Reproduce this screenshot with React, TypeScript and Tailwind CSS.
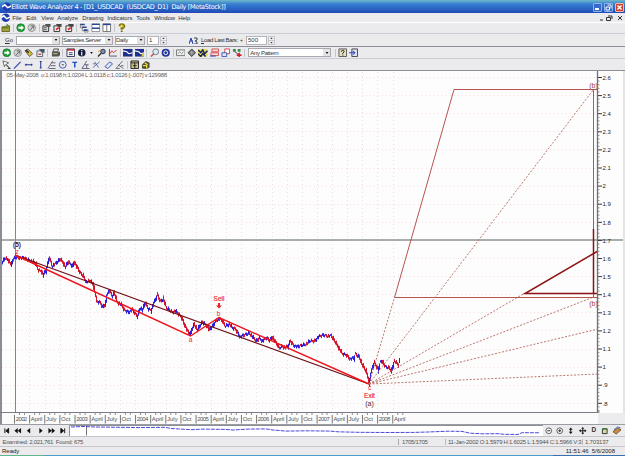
import React from 'react';
import clsx from 'clsx';

interface IconProps {
  name: string;
}

const drawings: Record<string, React.ReactNode> = {
  folder: (
    <>
      <path d="M1 4h3l1-1h4v6H1z" fill="#a8a030" stroke="#4c4a20" strokeWidth=".8" />
      <path d="M6 1l2 2M2 5h6" stroke="#268026" />
    </>
  ),
  play: (
    <>
      <circle cx="5" cy="5" r="4.2" fill="#27a03a" stroke="#0b6420" strokeWidth=".6" />
      <path d="M2.5 4h3V2.3L8.3 5 5.5 7.7V6h-3z" fill="#fff" />
    </>
  ),
  playOff: (
    <>
      <circle cx="5" cy="5" r="4" fill="#d0d2d2" stroke="#888" strokeWidth=".8" />
      <path d="M3 8l4-5M4 3h3v3" stroke="#666" fill="none" />
    </>
  ),
  edit: (
    <>
      <path d="M1 3h6v6H1z" fill="#ddd" stroke="#333" />
      <path d="M3 1h6v3H5z" fill="#555" />
      <path d="M2 5h3M2 7h3" stroke="#555" />
    </>
  ),
  editRed: (
    <>
      <path d="M1 3h6v6H1z" fill="#eee" stroke="#333" />
      <path d="M3 1h6v3H5z" fill="#444" />
      <path d="M3 7l3-2" stroke="#d22" strokeWidth="1.800" />
    </>
  ),
  cascade: (
    <>
      <path d="M1 1.500h5M3 4.500h5M5 7.500h4" stroke="#26468f" strokeWidth="1.600" />
      <path d="M1.500 1v4h2M3.500 4v4h2M5.500 7v2.500h4V7" stroke="#666" strokeWidth=".7" fill="none" />
    </>
  ),
  tileH: (
    <>
      <path d="M1 1h8v8H1z" fill="#fff" stroke="#667" strokeWidth=".7" />
      <path d="M1 1.500h8M1 5.500h8" stroke="#26468f" strokeWidth="1.400" />
    </>
  ),
  tileV: (
    <>
      <path d="M1 1h8v8H1zM5 1v8" fill="#fff" stroke="#555" strokeWidth=".8" />
      <path d="M1 1.500h8" stroke="#26468f" strokeWidth="1.500" />
    </>
  ),
  help: (
    <>
      <path d="M3 3.500Q3 1.500 5 1.500T7.500 3.500Q7 5 5 5.500V7" stroke="#827600" strokeWidth="2.500" fill="none" />
      <path d="M3.500 3.500Q4 2 5 2t1.500 1.500L5 5" stroke="#f4dc30" strokeWidth="1" fill="none" />
      <path d="M4 8h2v1.500H4z" fill="#756900" />
    </>
  ),
  tag: (
    <>
      <path d="M1 3l3-2 5 5-3 3z" fill="#d9c436" stroke="#333" strokeWidth=".8" />
      <path d="M2 2l3 3" stroke="#222" strokeWidth="1.500" />
    </>
  ),
  props: (
    <>
      <path d="M1 3h6v6H1z" fill="#eee" stroke="#345" strokeWidth=".8" />
      <path d="M3 1h6v4H6z" fill="#456" />
      <path d="M2.500 6.500h3" stroke="#c33" strokeWidth="1.400" />
    </>
  ),
  print: (
    <>
      <path d="M3 1h5L7 4H2z" fill="#ddd" stroke="#333" strokeWidth=".8" />
      <path d="M1 4h8.500v3.500L8 9H1z" fill="#555" />
      <path d="M2 6h5" stroke="#d4c85a" />
    </>
  ),
  list: (
    <>
      <path d="M1 1h8v8H1z" fill="#fff" stroke="#335" />
      <path d="M1 2h8" stroke="#b22" strokeWidth="1.500" />
      <path d="M3 5h4M3 7h4" stroke="#335" />
    </>
  ),
  info: (
    <>
      <circle cx="5" cy="5" r="4" fill="#161c3c" />
      <path d="M5 2v1.300M5 4.200V8" stroke="#fff" strokeWidth="1.200" />
    </>
  ),
  find: (
    <>
      <circle cx="6.300" cy="3.700" r="2.400" fill="#7d8fb0" stroke="#26324c" />
      <path d="M1 9l3.500-3.500" stroke="#333" strokeWidth="1.500" />
      <path d="M1 4l3-2" stroke="#c99a22" />
    </>
  ),
  chart: (
    <>
      <path d="M1.500 1v7.500H9.500" stroke="#556" fill="none" />
      <path d="M2 6l2-3 2 2 3-3" stroke="#c33" fill="none" />
    </>
  ),
  wave: (
    <>
      <path d="M0 1h10v8H0z" fill="#1c2f8c" />
      <path d="M0 3l4 1 2 2 4-1" stroke="#fff" strokeWidth="1.200" fill="none" />
    </>
  ),
  waveYellow: (
    <>
      <path d="M0 1h10v8H0z" fill="#1c2f8c" />
      <path d="M0 3l4 1 2 2 4-1" stroke="#fff" strokeWidth="1.200" fill="none" />
      <path d="M7 6h2.500v3H7z" fill="#dcca33" />
    </>
  ),
  zoom: (
    <>
      <circle cx="6" cy="4" r="3" fill="#d9f0f6" stroke="#667" strokeWidth=".9" />
      <path d="M1 9l3-3" stroke="#c0504a" strokeWidth="1.600" />
    </>
  ),
  globe: (
    <>
      <circle cx="5" cy="5" r="4.300" fill="#223596" />
      <circle cx="5" cy="5" r="2" fill="none" stroke="#fff" />
    </>
  ),
  panel: (
    <>
      <path d="M.5 2h9v6h-9z" fill="#eee" stroke="#777" />
      <path d="M2 6l2-2 2 2 2-2" stroke="#7a9a7a" fill="none" />
    </>
  ),
  gem: (
    <>
      <path d="M5 1l4 4-4 4-4-4z" fill="#777" stroke="#444" />
      <path d="M3 5h4M5 3v4" stroke="#bbb" strokeWidth=".8" />
    </>
  ),
  stripes: (
    <>
      <path d="M0 1h10v8H0z" fill="#e8d95a" />
      <path d="M0 2l3 3 2-3 2 4 3-3M0 6l3 3 2-3 3 3" stroke="#16245c" strokeWidth="1.500" fill="none" />
    </>
  ),
  boxRed: (
    <>
      <path d="M2 1h7v3H2zM1 5h8v3H1z" fill="#f6d6d6" stroke="#cf4444" strokeWidth=".9" />
      <path d="M0 8.500h6" stroke="#2b46b8" />
    </>
  ),
  cardRed: (
    <>
      <path d="M4 1h5v5H4z" fill="#fff" stroke="#cf4444" />
      <path d="M1 5h5v4H1z" fill="#dfe4ff" stroke="#4459bb" />
    </>
  ),
  nodes: (
    <>
      <path d="M1 1h3v3H1zM6 1h3v3H6z" fill="#3a8a48" />
      <path d="M3 4l4 3" stroke="#444" />
      <path d="M7.500 5v5M5 7.500h5" stroke="#c9202a" strokeWidth="1.600" />
    </>
  ),
  helpBox: (
    <>
      <path d="M1 1h8v8H1z" fill="#e6e2c2" stroke="#555" />
      <path d="M3.500 4Q3.500 2.500 5 2.500T6.500 4L5 5.500v1M5 7v1" stroke="#222" fill="none" />
    </>
  ),
  exit: (
    <>
      <path d="M3 1h6v8H3z" fill="#dfe4f4" stroke="#444" />
      <path d="M0 5h6M4 3l2.500 2L4 7" stroke="#2640c0" fill="none" />
    </>
  ),
  cursor: (
    <>
      <path d="M1 1l6 2-2.500 1.500L8 8.500 3.500 5 2.500 7z" fill="#fff" stroke="#444" strokeWidth=".8" />
      <path d="M6 9h3" stroke="#333" />
    </>
  ),
  line: <path d="M1 9l7-7" stroke="#2f42ad" strokeWidth="1.200" />,
  hline: <path d="M1 5h8M2 4v2M8 4v2" stroke="#26368f" strokeWidth="1.100" />,
  vline: <path d="M5 1v8M4 1.500h2M4 8.500h2" stroke="#26368f" strokeWidth="1.100" />,
  fib: <path d="M1 9l5-8M5 3h4M4 6h5M2 9h7" stroke="#4b4f66" strokeWidth=".9" />,
  circle: (
    <>
      <circle cx="5" cy="5" r="3.600" fill="none" stroke="#2b48b8" strokeWidth=".9" />
      <path d="M4 5h2" stroke="#333" />
    </>
  ),
  text: <path d="M2.500 2.500h5M5 2v6" stroke="#1e4ec8" strokeWidth="1.500" />,
  angle: <path d="M1 9l5-8M1 9h8M4 5h4M6 5v4" stroke="#4d526e" strokeWidth=".9" fill="none" />,
  cross: <path d="M1 8l7-6M3 2l4 6M1 4h3" stroke="#4d5ea8" strokeWidth=".9" fill="none" />,
  channel: <path d="M1 7l5-5 3 2-5 5z" fill="#d8e2ff" stroke="#3648a0" strokeWidth=".9" />,
  fan: <path d="M1 9l7-8M3 5l6 4M1 9h4M6 6l3 0" stroke="#555a70" strokeWidth=".9" fill="none" />,
  table: (
    <>
      <path d="M1 1h8v8H1z" fill="#ccc58a" stroke="#222" />
      <path d="M1 3h8M5 3v6M3 6h4" stroke="#222" />
    </>
  ),
  money: (
    <>
      <path d="M1 5l4-4 4 2v5L6 9.500 1 9z" fill="#4b4b33" />
      <path d="M2 6h4v3M4 3l3 2" stroke="#eddb42" strokeWidth="1.400" fill="none" />
    </>
  ),
  first: <path d="M3 2.500v5M7 2.500v5L4 5z" stroke="#111" fill="#111" />,
  rewind: <path d="M5 2v6L1.500 5zM8.500 2v6L5 5z" fill="#111" />,
  prev: <path d="M6.500 2v6l-3.500-3z" fill="#111" />,
  next: <path d="M3.500 2v6l3.500-3z" fill="#111" />,
  forward: <path d="M1.500 2v6L5 5zM5 2v6l3.500-3z" fill="#111" />,
  last: <path d="M7 2.500v5M3 2.500v5L6 5z" stroke="#111" fill="#111" />,
  zoomOut: (
    <>
      <circle cx="5" cy="5" r="3" fill="#fff" stroke="#333" strokeWidth=".8" />
      <path d="M3.500 5h3" stroke="#222" />
    </>
  ),
  zoomIn: (
    <>
      <circle cx="5" cy="5" r="3" fill="#fff" stroke="#333" strokeWidth=".8" />
      <path d="M3.500 5h3M5 3.500v3" stroke="#222" />
    </>
  ),
  updown: <path d="M5 1.500L7 4H3zM5 8.500L3 6h4zM4.500 3h1v4h-1z" fill="#111" />,
  move: (
    <>
      <path d="M5 2v6M2 5h6" stroke="#111" strokeWidth="1" />
      <path d="M5 1l1.500 2h-3zM5 9L3.500 7h3zM1 5l2-1.500v3zM9 5L7 3.500v3z" fill="#111" />
    </>
  ),
  lock: (
    <>
      <path d="M2.500 3h5v5h-5z" fill="#dcd9a0" stroke="#333" />
      <path d="M2.500 3h5" stroke="#2c7a35" strokeWidth="1.200" />
    </>
  ),
  book: (
    <>
      <path d="M1 6l5-4 3.500 2-5 4.500z" fill="#c98b3c" stroke="#5c3a1c" strokeWidth=".8" />
      <path d="M2 4l4-3 3 1" stroke="#4a67c0" fill="none" />
    </>
  ),
  app: (
    <>
      <circle cx="5" cy="5" r="4.500" fill="#1d3fae" />
      <path d="M0 5l3-2 3 3 4-2" stroke="#fff" strokeWidth="1.600" fill="none" />
    </>
  ),
};

const Icon: React.FC<IconProps> = ({ name }) => (
  <span className="flex w-[11.3px] shrink-0 items-center justify-center">
    <svg viewBox="0 0 10 10" className="size-[9.5px]">
      {drawings[name]}
    </svg>
  </span>
);

const Sep = () => (
  <span className="flex w-[3.6px] shrink-0 justify-center">
    <span className="h-[8px] w-px bg-[#c4c4cc]" />
  </span>
);

// '|' draws a separator between groups
const IconRow: React.FC<{ items: string[] }> = ({ items }) => (
  <>{items.map((name, i) => (name === '|' ? <Sep key={i} /> : <Icon key={i} name={name} />))}</>
);

const Combo: React.FC<{ label: string; className: string }> = ({ label, className }) => (
  <div className={clsx('flex h-[9px] shrink-0 items-center border border-[#a8a8b0] bg-white', className)}>
    <span className="grow">{label}</span>
    <span className="flex h-full w-[7px] shrink-0 items-center justify-center bg-[#e4e2e2]">
      <svg viewBox="0 0 4 3" className="h-[2px] w-[4px]">
        <path d="M0 0h4L2 3z" fill="#111" />
      </svg>
    </span>
  </div>
);

const Spinner = () => (
  <svg viewBox="0 0 7 9" className="ml-px h-[9px] w-[7px] shrink-0">
    <path d="M.5 .5h6v8h-6zM.5 4.500h6" fill="#eee" stroke="#b5b5bd" strokeWidth=".7" />
    <path d="M3.500 1.500l1.200 1.500H2.300zM3.500 7.500L2.300 6h2.400z" fill="#333" />
  </svg>
);

const menu = [
  { label: 'File', width: 'w-[14px]' },
  { label: 'Edit', width: 'w-[15px]' },
  { label: 'View', width: 'w-[16px]' },
  { label: 'Analyze', width: 'w-[25px]' },
  { label: 'Drawing', width: 'w-[25px]' },
  { label: 'Indicators', width: 'w-[29px]' },
  { label: 'Tools', width: 'w-[18px]' },
  { label: 'Window', width: 'w-[24px]' },
  { label: 'Help', width: 'w-[14px]' },
];

const prices: [number, number][] = [
  [2, 262], [5, 258], [8, 260], [11, 265], [13, 259], [16, 257], [20, 258], [24, 258], [28, 260], [33, 262],
  [36, 265], [38, 270], [41, 271], [43, 275], [46, 270], [48, 261], [49, 258], [52, 266], [56, 263], [60, 259],
  [63, 263], [65, 267], [68, 262], [72, 266], [74, 262], [77, 268], [80, 273], [83, 276], [86, 282], [90, 281],
  [93, 285], [95, 294], [97, 302], [100, 303], [102, 307], [105, 304], [107, 293], [109, 291], [112, 296],
  [114, 293], [117, 302], [121, 305], [124, 310], [128, 312], [132, 310], [135, 314], [137, 316], [140, 308],
  [142, 310], [145, 303], [148, 309], [151, 310], [153, 304], [155, 300], [157, 295], [160, 301], [163, 299],
  [166, 308], [169, 310], [172, 312], [175, 311], [178, 314], [181, 317], [184, 324], [187, 331], [190, 334],
  [192, 328], [194, 324], [197, 330], [202, 322], [206, 325], [209, 330], [213, 325], [216, 320], [219, 319],
  [222, 321], [225, 326], [229, 324], [232, 328], [235, 329], [238, 334], [240, 337], [244, 335], [249, 333],
  [253, 338], [256, 341], [259, 338], [262, 341], [266, 338], [269, 340], [272, 337], [275, 342], [279, 348],
  [282, 346], [285, 348], [288, 346], [290, 341], [293, 345], [297, 347], [302, 345], [306, 344], [310, 341],
  [314, 341], [318, 337], [323, 335], [328, 336], [331, 336], [335, 342], [338, 347], [342, 354], [346, 355],
  [350, 359], [354, 358], [355, 354], [359, 357], [362, 365], [366, 372], [369, 383], [371, 370], [374, 363],
  [378, 370], [380, 362], [382, 361], [385, 367], [389, 368], [391, 371], [394, 361], [397, 364], [399, 366],
];

// One bar per pixel column, split into up (blue) and down (red) strokes
const buildBars = () => {
  let up = '';
  let down = '';
  let k = 0;
  for (let x = 2; x < 399; x++) {
    while (k < prices.length - 2 && prices[k + 1][0] <= x) k++;
    const [x0, y0] = prices[k];
    const [x1, y1] = prices[k + 1];
    const slope = (y1 - y0) / (x1 - x0);
    const wobble = ((x * 37) % 11) / 5 - 1;
    const y = y0 + slope * (x - x0) + wobble;
    const half = 0.9 + Math.abs(slope) / 2 + ((x * 13) % 5) / 5;
    const bar = `M${x + 0.5} ${(y - half).toFixed(1)}V${(y + half).toFixed(1)}`;
    if (slope + ((x * 29) % 7) / 2 - 1.6 > 0) down += bar;
    else up += bar;
  }
  return { up, down };
};

const bars = buildBars();
const quarters = Array.from({ length: 26 }, (_, i) => 14.5 + i * 15.13);
const levels = ['2.6', '2.5', '2.4', '2.3', '2.2', '2.1', '2', '1.9', '1.8', '1.7', '1.6', '1.5', '1.4', '1.3', '1.2', '1.1', '1', '.9', '.8'];
const levelY = (i: number) => 77.5 + i * 18.1;

const Chart = () => (
  <svg viewBox="0 71 625 342" className="block h-[342px] w-[625px] shrink-0 font-['Liberation_Sans'] text-[6px]">
    <path d="M0 71h625v342H0z" fill="#fdfdfd" />
    <g stroke="#f1dede" strokeWidth="1" strokeDasharray="1 3" shapeRendering="crispEdges">
      {levels.map((l, i) => (
        <path key={l} d={`M2 ${levelY(i)}H597`} />
      ))}
      {quarters.slice(1).map((x) => (
        <path key={x} d={`M${x + 0.3} 72V412`} />
      ))}
    </g>

    <path d="M15.500 71V412" stroke="#7f8886" />
    <path d="M2 240H623" stroke="#8b9492" strokeWidth="1.300" />

    <path d={bars.up} stroke="#2a1fe0" />
    <path d={bars.down} stroke="#d4142c" />
    <path d="M399.500 358v5" stroke="#5c2a2a" />

    <path d="M15 255L369 384" stroke="#6e1218" strokeWidth="1.300" fill="none" />
    <path d="M15 255L190.500 336L219 317.500L369 384" stroke="#ee141c" strokeWidth="1.400" fill="none" />

    <g stroke="#b2695c" strokeWidth=".9" strokeDasharray="2 1.600" fill="none">
      <path d="M369 384L394.500 297.300" />
      <path d="M369 384L593.500 89.500" />
      <path d="M369 384L525 293" />
      <path d="M369 384L593 297.300" />
      <path d="M369 384L598 329" />
      <path d="M369 384L598 374" />
    </g>
    <path d="M394.500 297.500L454 89.500H598M593.500 89.500V297.500M394.500 297.500H598" stroke="#b8544e" fill="none" />
    <path d="M598 251L525 293.500H598M593.500 229V293" stroke="#8c1216" strokeWidth="1.500" fill="none" />

    <g textAnchor="middle" fill="#e8242c" className="text-[6.5px]">
      <text x="219" y="301.300" stroke="#e8242c" strokeWidth=".15">Sell</text>
      <path d="M219 308.500l-3-3h2v-2.500h2v2.500h2z" />
      <text x="218.500" y="316">b</text>
      <text x="190.500" y="342">a</text>
      <text x="369.500" y="390">c</text>
      <text x="369.500" y="397.500" stroke="#e8242c" strokeWidth=".15">Exit</text>
      <text x="369.500" y="405.500" fill="#5a1820" className="text-[7px]">(a)</text>
      <text x="17" y="246.500" fill="#501418" className="font-bold">(5)</text>
      <text x="17" y="254">z</text>
      <text x="593.500" y="88.300" fill="#a33c3a" className="text-[7px]">(b)</text>
      <text x="593.500" y="305.800" fill="#a33c3a" className="text-[7px]">(b)</text>
    </g>

    <text x="6.500" y="77.300" fill="#666" textLength="160.500">
      <tspan>05-May-2008{'\u00a0 '}</tspan>
      <tspan fill="#a34a4a">o:</tspan>
      <tspan>1.0198 </tspan>
      <tspan fill="#a34a4a">h:</tspan>
      <tspan>1.0204 </tspan>
      <tspan fill="#a34a4a">L:</tspan>
      <tspan>1.0118 </tspan>
      <tspan fill="#a34a4a">c:</tspan>
      <tspan>1.0126 [-.007] v:129988</tspan>
    </text>

    <path d="M597.500 71V413" stroke="#70707a" strokeWidth="1.300" />
    {levels.map((l, i) => (
      <g key={l}>
        <path d={`M598 ${levelY(i)}h4`} stroke="#333" />
        {[3.6, 7.2, 10.900, 14.5].map((d) => (
          <path key={d} d={`M598 ${Math.min(levelY(i) + d, 412)}h1.500`} stroke="#777" strokeWidth=".8" />
        ))}
        <text x="602.500" y={levelY(i) + 2.2} fill="#222">{l}</text>
      </g>
    ))}
    <path d="M0 71h2v342H0z" fill="#8c8c94" />
    <path d="M623 71h2v342h-2z" fill="#e2e2e8" />
    <path d="M0 412.500H598" stroke="#7c7c86" />
  </svg>
);

const quarterLabel = (i: number) => (i % 4 === 0 ? String(2002 + i / 4) : ['', 'April', 'July', 'Oct'][i % 4]);

const DateAxis = () => (
  <div className="flex h-[12px] shrink-0 border-b border-[#9c9ca4] bg-[#ececee]">
    <svg viewBox="0 413 598 11" className="block h-[11px] w-[598px] shrink-0 font-['Liberation_Sans'] text-[6px]">
      <path d="M0 413h598v11H0z" fill="#fbfbfb" />
      <path d="M0 413h2v11H0z" fill="#8c8c94" />
      {quarters.map((x, i) => (
        <g key={x}>
          <path d={`M${x} 415v8.500`} stroke="#777" />
          <path d={`M${x + 5} 413v2M${x + 10} 413v2`} stroke="#777" strokeWidth=".8" />
          <text x={x + 1.2} y="421.300" fill="#555" textLength={i % 4 === 0 || i % 4 === 1 ? 11.5 : undefined}>
            {quarterLabel(i)}
          </text>
        </g>
      ))}
    </svg>
  </div>
);

const Overview = () => (
  <svg viewBox="69 425 474 11" className="h-[11px] w-[474px] shrink-0">
    <path d="M69 425h474v11H69z" fill="#fff" />
    <path d="M69.500 436v-10.500H543" stroke="#8b9094" fill="none" />
    <path d="M86.500 425.500v10" stroke="#777" />
    <path
      d="M71 427l12-.5 12 .5 25 .3 20 .3 25-.3 6 1.200 20 1.200 12-.6 22 .3 8 .6 15-.9 18-.2 6 1 14 1.200 20-.3 24 .3 8 .7 20 .5 30 .2 26-.1 14-.4 20-.8 14 .2 8 1.800 12 .6 16-.1 6 .6 14 .2 4-1.800 18 .1"
      fill="none"
      stroke="#3634d6"
      strokeWidth=".9"
      strokeDasharray="4 1"
    />
  </svg>
);

const TitleBar = () => (
  <header className="flex h-[13px] shrink-0 items-center bg-linear-to-b from-[#6fb8c8] via-[#3980d0] via-30% to-[#2149b8] pr-[1.500px] pt-px pl-px text-white">
    <Icon name="app" />
    <h1 className="-ml-[1px] grow font-['DejaVu_Sans'] text-[6.500px] leading-none font-normal tracking-[-0.350px] whitespace-pre">
      {'Elliott Wave Analyzer 4 - [D1_USDCAD  (USDCAD_D1)  Daily [MetaStock]]'}
    </h1>
    <div className="flex gap-[2px]">
      <span className="flex size-[9px] items-end rounded-[1px] border border-[#8cb4ea] bg-[#3569cc] p-px">
        <span className="h-[1.500px] w-[4px] bg-white" />
      </span>
      <span className="flex size-[9px] items-center justify-center rounded-[1px] border border-[#8cb4ea] bg-[#3569cc]">
        <svg viewBox="0 0 7 7" className="size-[7px]">
          <path d="M2.500 1h3.500v3.500M1 3h3.500v3H1z" stroke="#fff" fill="none" />
        </svg>
      </span>
      <span className="flex size-[9px] items-center justify-center rounded-[1px] border border-[#f0b8a4] bg-[#d0462c]">
        <svg viewBox="0 0 7 7" className="size-[7px]">
          <path d="M1.500 1.500l4 4M5.500 1.500l-4 4" stroke="#fff" strokeWidth="1.400" />
        </svg>
      </span>
    </div>
  </header>
);

export default function App() {
  return (
    <div className="flex h-[456px] w-[625px] flex-col overflow-hidden bg-[#ebebed] font-['Liberation_Sans'] text-[6px] leading-none whitespace-nowrap text-[#333]">
      <TitleBar />

      <nav className="flex h-[10px] shrink-0 items-center border-b border-white">
        <Icon name="app" />
        <div className="flex grow pl-[1px] tracking-[-0.100px]">
          {menu.map((m) => (
            <span key={m.label} className={m.width}>{m.label}</span>
          ))}
        </div>
        <svg viewBox="0 0 26 8" className="mr-px h-[8px] w-[26px]">
          <path d="M2 6h3M10 2h4v3M8.500 3.500h4v3h-4zM20 2l4 4M24 2l-4 4" stroke="#333" fill="none" />
        </svg>
      </nav>

      <div className="flex h-[11px] shrink-0 items-center border-b border-[#c9cdd6]">
        <IconRow items={['folder', '|', 'play', 'playOff', '|', 'edit', 'editRed', 'editRed', '|', 'cascade', 'tileH', 'tileV', '|', 'help']} />
      </div>

      <div className="flex h-[13px] shrink-0 items-center border-b border-[#8e8e98]">
        <span className="w-[16px] pl-[5px]"><u>G</u>o</span>
        <Combo label="" className="w-[44px]" />
        <Combo label="Samples Server" className="ml-[2px] w-[51px] tracking-[-0.350px]" />
        <Combo label="Daily" className="ml-[2px] w-[30px] tracking-[-0.250px]" />
        <span className="ml-[2px] flex h-[9px] w-[12px] items-center border border-[#b4b4ba] bg-white pl-px">1</span>
        <Spinner />
        <svg viewBox="0 0 9 8" className="ml-[22px] h-[8px] w-[9px]">
          <path d="M0 8l2-6 2 6M1 5h3" stroke="#2b3fae" fill="none" />
          <path d="M5 2h3v2L6 5l2 1v2H5" stroke="#345" fill="none" />
        </svg>
        <span className="ml-[3px] w-[39px] tracking-[-0.350px]"><u>L</u>oad Last Bars:</span>
        <span className="w-[6px] text-[5px]">+</span>
        <span className="flex h-[9px] w-[21px] items-center border border-[#b4b4ba] bg-white pl-px">500</span>
        <Spinner />
      </div>

      <div className="flex h-[12px] shrink-0 items-center border-b border-[#c9cdd6] pl-px">
        <IconRow items={['play', 'playOff', 'tag', 'props', '|', 'print', '|', 'list', 'info']} />
        <span className="flex w-[9px] justify-center">
          <svg viewBox="0 0 4 3" className="h-[2px] w-[3px]">
            <path d="M0 0h4L2 3z" fill="#111" />
          </svg>
        </span>
        <IconRow
          items={['find', 'chart', '|', 'wave', 'waveYellow', '|', 'zoom', 'globe', '|', 'panel', 'gem', 'stripes', 'boxRed', 'cardRed', 'nodes', '|']}
        />
        <Combo label="Any Pattern" className="ml-[2px] w-[83px] pl-px tracking-[-0.300px]" />
        <span className="w-[2px]" />
        <IconRow items={['|', 'helpBox', 'exit']} />
      </div>

      <div className="flex h-[12px] shrink-0 items-center border-b border-[#8e8e98] pl-px">
        <IconRow items={['cursor', 'line', 'hline', 'vline', 'fib', 'circle', 'text', 'angle', 'cross', 'channel', 'fan', '|', 'table', 'money']} />
      </div>

      <Chart />
      <DateAxis />

      <div className="flex h-[12px] shrink-0 items-center border-b border-[#c2c2ca] pl-px">
        <div className="flex w-[68px]">
          <IconRow items={['first', 'rewind', 'prev', 'next', 'forward', 'last']} />
        </div>
        <Overview />
        <IconRow items={['zoomOut', 'zoomIn', 'updown', 'move']} />
        <span className="w-[11.300px] text-center text-[6.500px] font-bold">D</span>
        <IconRow items={['lock', 'book']} />
      </div>

      <div className="flex h-[10px] shrink-0 items-center border-b border-[#c6c6cc] text-[#555]">
        <span className="w-[398px] pl-[2.500px] tracking-[-0.320px] whitespace-pre">{'Examined: 2,021,761  Found: 675'}</span>
        <span className="w-[47px] border-l border-[#aaa] pl-[3px] tracking-[-0.320px]">1705/1705</span>
        <span className="w-[137px] border-l border-[#bbb] pl-[2px] tracking-[-0.270px]">11-Jan-2002 O:1.5979 H:1.6025 L:1.5944 C:1.5966 V:3</span>
        <span className="w-[34px] border-l border-[#bbb] pl-[2px] tracking-[-0.200px]">1.703137</span>
      </div>

      <footer className="flex h-[8px] shrink-0 items-center justify-between pr-[10px] pl-[2px] text-[#222]">
        <span>Ready</span>
        <span className="flex gap-[3px]">
          <span>11:51:46</span>
          <span>5/6/2008</span>
        </span>
      </footer>
      <div className="flex h-px shrink-0">
        <span className="w-[45px] bg-[#62b48a]" />
        <span className="w-[508px] bg-[#4b9cc8]" />
        <span className="grow bg-[#3a6fae]" />
      </div>
    </div>
  );
}
